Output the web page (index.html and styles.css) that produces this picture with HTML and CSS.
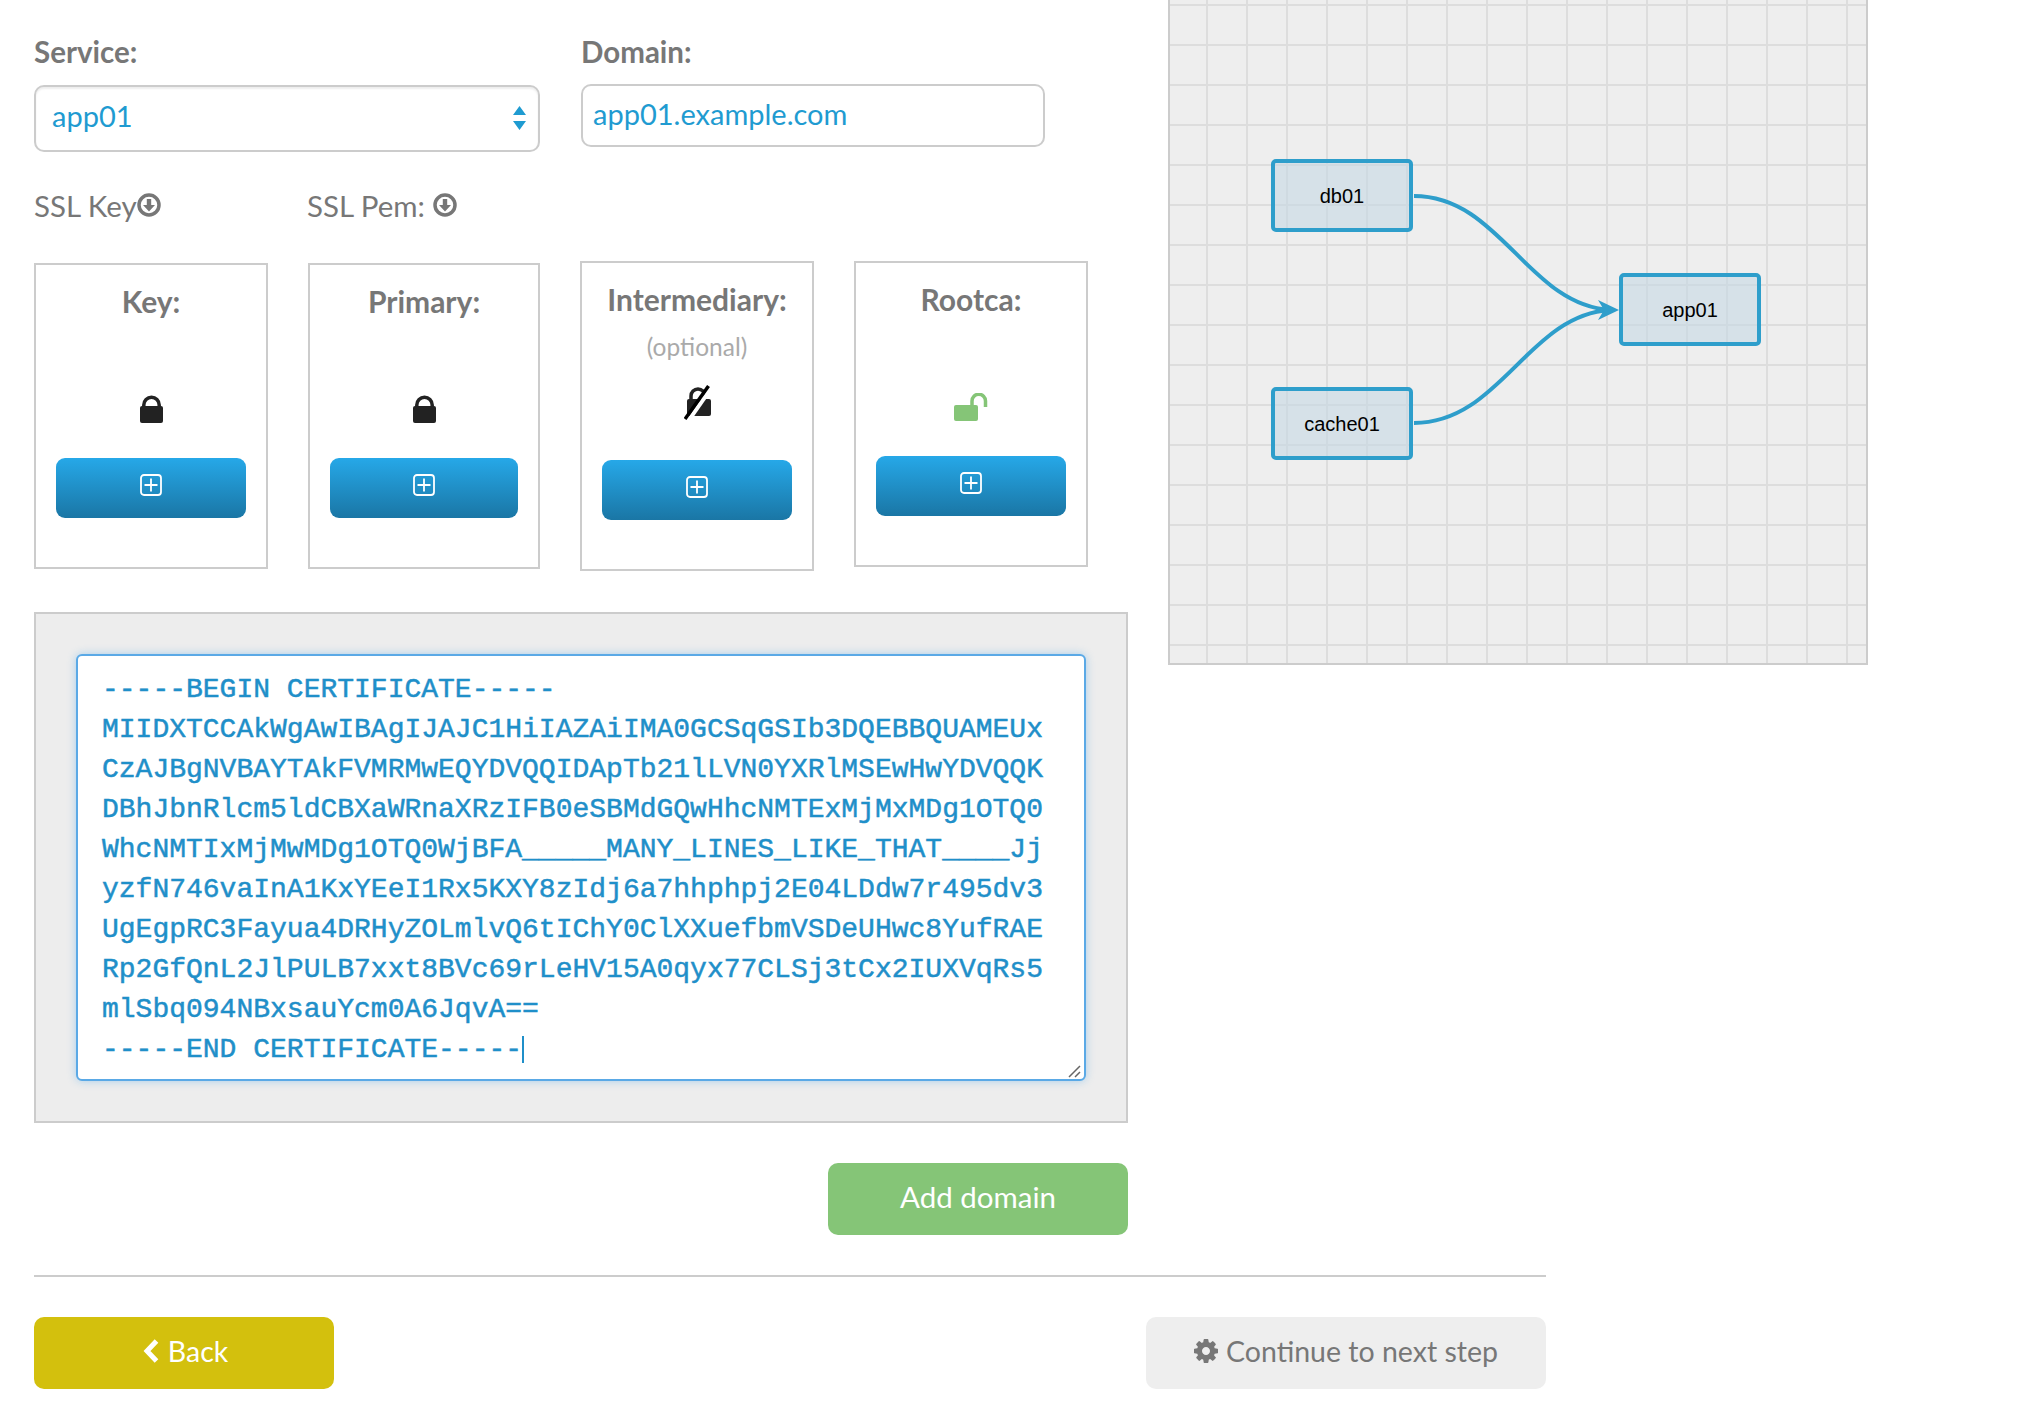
FILE: index.html
```html
<!DOCTYPE html>
<html lang="en">
<head>
  <meta charset="UTF-8" />
  <title>Add domain</title>
  <link rel="stylesheet" href="styles.css">
</head>
<body>
  <div class="page">
    <div class="top">
      <div class="left">
        <div class="fields">
          <div class="field field-service">
            <label class="label">Service:</label>
            <div class="select-wrap">
              <select class="select"><option>app01</option></select>
              <svg class="select-arrows" viewBox="0 0 13 24"><path d="M6.500 0L13 9H0zM0 15h13L6.500 24z"/></svg>
            </div>
          </div>
          <div class="field field-domain">
            <label class="label">Domain:</label>
            <input class="input" type="text" value="app01.example.com">
          </div>
        </div>

        <div class="ssl-links">
          <span class="ssl-link ssl-key">SSL Key<svg class="dl-icon" viewBox="0 0 24 24"><circle cx="12" cy="12" r="10" /><path class="dl-arrow" d="M9.800 6h4.400v6H18l-6 6.500L6 12h3.800z"/></svg></span>
          <span class="ssl-link">SSL Pem: <svg class="dl-icon" viewBox="0 0 24 24"><circle cx="12" cy="12" r="10" /><path class="dl-arrow" d="M9.800 6h4.400v6H18l-6 6.500L6 12h3.800z"/></svg></span>
        </div>

        <div class="cards">
          <div class="card card-low">
            <div class="card-title">Key:</div>
            <div class="card-note"></div>
            <div class="card-icon">
              <svg class="lock" viewBox="0 0 23 28"><path class="lock-shackle" d="M3.800 13V10a7.700 7.700 0 0 1 15.400 0v3"/><rect y="11" width="23" height="17" rx="2"/></svg>
            </div>
            <button class="add-btn"><svg class="plus" viewBox="0 0 22 22"><rect x="1" y="1" width="20" height="20" rx="3"/><path d="M11 4.500v13M4.500 11h13"/></svg></button>
          </div>
          <div class="card card-low card-narrow">
            <div class="card-title">Primary:</div>
            <div class="card-note"></div>
            <div class="card-icon">
              <svg class="lock" viewBox="0 0 23 28"><path class="lock-shackle" d="M3.800 13V10a7.700 7.700 0 0 1 15.400 0v3"/><rect y="11" width="23" height="17" rx="2"/></svg>
            </div>
            <button class="add-btn"><svg class="plus" viewBox="0 0 22 22"><rect x="1" y="1" width="20" height="20" rx="3"/><path d="M11 4.500v13M4.500 11h13"/></svg></button>
          </div>
          <div class="card card-tall">
            <div class="card-title">Intermediary:</div>
            <div class="card-note">(optional)</div>
            <div class="card-icon card-icon-slashed">
              <svg class="lock-off" viewBox="0 0 27 35"><path class="lock-shackle" d="M7 17V11a7 7 0 0 1 14 0v2"/><rect x="3" y="14" width="24" height="17" rx="2"/><path class="slash-gap" d="M28 2L5 35"/><path class="slash" d="M24.500 1L1 34"/></svg>
            </div>
            <button class="add-btn"><svg class="plus" viewBox="0 0 22 22"><rect x="1" y="1" width="20" height="20" rx="3"/><path d="M11 4.500v13M4.500 11h13"/></svg></button>
          </div>
          <div class="card">
            <div class="card-title">Rootca:</div>
            <div class="card-note"></div>
            <div class="card-icon">
              <svg class="unlock" viewBox="0 0 34 28"><path class="unlock-shackle" d="M18 13V8a6.500 6.500 0 0 1 13.500 0v6"/><rect y="12" width="24" height="16" rx="2"/></svg>
            </div>
            <button class="add-btn"><svg class="plus" viewBox="0 0 22 22"><rect x="1" y="1" width="20" height="20" rx="3"/><path d="M11 4.500v13M4.500 11h13"/></svg></button>
          </div>
        </div>

        <div class="cert-box">
          <div class="cert-wrap">
            <textarea class="cert" wrap="off" spellcheck="false">-----BEGIN CERTIFICATE-----
MIIDXTCCAkWgAwIBAgIJAJC1HiIAZAiIMA0GCSqGSIb3DQEBBQUAMEUx
CzAJBgNVBAYTAkFVMRMwEQYDVQQIDApTb21lLVN0YXRlMSEwHwYDVQQK
DBhJbnRlcm5ldCBXaWRnaXRzIFB0eSBMdGQwHhcNMTExMjMxMDg1OTQ0
WhcNMTIxMjMwMDg1OTQ0WjBFA_____MANY_LINES_LIKE_THAT____Jj
yzfN746vaInA1KxYEeI1Rx5KXY8zIdj6a7hhphpj2E04LDdw7r495dv3
UgEgpRC3Fayua4DRHyZOLmlvQ6tIChY0ClXXuefbmVSDeUHwc8YufRAE
Rp2GfQnL2JlPULB7xxt8BVc69rLeHV15A0qyx77CLSj3tCx2IUXVqRs5
mlSbq094NBxsauYcm0A6JqvA==
-----END CERTIFICATE-----</textarea>
            <span class="caret"></span>
            <svg class="grip" viewBox="0 0 13 13"><path d="M1 12L12 1M7 12l5-5"/></svg>
          </div>
        </div>

        <div class="add-row">
          <button class="btn btn-green">Add domain</button>
        </div>
      </div>

      <!-- dependency graph -->
      <div class="graph">
        <svg class="edges" viewBox="0 0 698 665">
          <path d="M244 196C330 196 358 305 440 310"/>
          <path d="M244 423C330 423 358 315 440 310"/>
          <path class="arrow-head" d="M428 300L449 310L428 320L434 310z"/>
        </svg>
        <div class="node node-db">db01</div>
        <div class="node node-cache">cache01</div>
        <div class="node node-app">app01</div>
      </div>
    </div>

    <hr class="rule">

    <div class="nav">
      <button class="btn btn-yellow"><svg class="chevron" viewBox="0 0 17 26"><path d="M13.500 3L4 13l9.500 10"/></svg>Back</button>
      <button class="btn btn-gray"><svg class="gear" viewBox="0 0 1536 1792"><path d="M1024 896q0-106-75-181t-181-75-181 75-75 181 75 181 181 75 181-75 75-181zm512-109v222q0 12-8 23t-20 13l-185 28q-19 54-39 91 35 50 107 138 10 12 10 25t-9 23q-27 37-99 108t-94 71q-12 0-26-9l-138-108q-44 23-91 38-16 136-29 186-7 28-36 28h-222q-14 0-24.500-8.500t-11.500-21.500l-28-184q-49-16-90-37l-141 107q-10 9-25 9-14 0-25-11-126-114-165-168-7-10-7-23 0-12 8-23 15-21 51-66.500t54-70.500q-27-50-41-99l-183-27q-13-2-21-12.500t-8-23.500v-222q0-12 8-23t19-13l186-28q14-46 39-92-40-57-107-138-10-12-10-24 0-10 9-23 26-36 98.500-107.500t94.500-71.500q13 0 26 10l138 107q44-23 91-38 16-136 29-186 7-28 36-28h222q14 0 24.500 8.500t11.500 21.500l28 184q49 16 90 37l142-107q9-9 24-9 13 0 25 10 129 119 165 170 7 8 7 22 0 12-8 23-15 21-51 66.500t-54 70.500q26 50 41 98l183 28q13 2 21 12.500t8 23.500z"/></svg>Continue to next step</button>
    </div>
  </div>
</body>
</html>
```

FILE: styles.css
```css
* {
  box-sizing: border-box;
}

body {
  margin: 0;
  background: white;
  font-family: Lato, "Open Sans", sans-serif;
  color: #777;
}

.page {
  padding-left: 34px;
  width: 1900px;
}

.top {
  display: flex;
  gap: 40px;
  align-items: flex-start;
}

.left {
  width: 1094px;
}

/* service + domain */
.fields {
  display: flex;
  gap: 41px;
  padding-top: 34px;
}

.field-service {
  width: 506px;
}

.field-domain {
  width: 464px;
}

.label {
  display: block;
  height: 36px;
  font-size: 29.5px;
  font-weight: 700;
  line-height: 36px;
}

.field-service .label {
  margin-bottom: 15px;
}

.field-domain .label {
  margin-bottom: 14px;
}

.select-wrap {
  position: relative;
}

.select {
  display: block;
  width: 100%;
  height: 67px;
  padding: 0 16px 6px;
  border: 2px solid #ccc;
  border-radius: 10px;
  background: white;
  box-shadow: inset 0 2px 2px rgba(0, 0, 0, 0.07);
  appearance: none;
  font-family: inherit;
  font-size: 29px;
  color: #1f9bd1;
}

.select-arrows {
  position: absolute;
  top: 21px;
  right: 14px;
  width: 13px;
  height: 24px;
  fill: #1f9bd1;
}

.input {
  display: block;
  width: 100%;
  height: 63px;
  padding: 0 10px 4px;
  border: 2px solid #ccc;
  border-radius: 10px;
  font-family: inherit;
  font-size: 29px;
  color: #1f9bd1;
}

.ssl-links {
  display: flex;
  height: 36px;
  margin-top: 35px;
  align-items: center;
  font-size: 29.5px;
}

.ssl-link {
  display: flex;
  align-items: center;
  white-space: pre;
}

.ssl-key {
  width: 273px;
}

.dl-icon {
  width: 24px;
  height: 24px;
  fill: none;
  stroke: #777;
  stroke-width: 3.5;
}

.dl-arrow {
  fill: #777;
  stroke: none;
}

/* cert cards */
.cards {
  display: flex;
  gap: 40px;
  align-items: flex-start;
  margin-top: 38px;
}

.card {
  width: 234px;
  height: 306px;
  padding: 20px 20px 0;
  border: 2px solid #ccc;
  text-align: center;
}

.card-low {
  margin-top: 2px;
}

.card-narrow {
  width: 232px;
}

.card-tall {
  height: 310px;
}

.card-title {
  height: 36px;
  font-size: 30px;
  font-weight: 700;
  line-height: 33px;
}

.card-note {
  height: 58px;
  padding-top: 10px;
  font-size: 24.5px;
  line-height: 36px;
  color: #aaa;
}

.card-icon {
  display: flex;
  justify-content: center;
  height: 63px;
  margin-top: 16px;
}

.card-icon-slashed {
  height: 75px;
  margin-top: 8px;
}

.lock {
  width: 23px;
  height: 28px;
  fill: #222;
}

.lock-shackle {
  fill: none;
  stroke: #222;
  stroke-width: 3.5;
}

.lock-off {
  width: 27px;
  height: 35px;
  fill: #222;
}

.slash-gap {
  fill: none;
  stroke: white;
  stroke-width: 4;
}

.slash {
  fill: none;
  stroke: black;
  stroke-width: 3.5;
}

.unlock {
  width: 34px;
  height: 28px;
  fill: #85c577;
}

.unlock-shackle {
  fill: none;
  stroke: #85c577;
  stroke-width: 3.5;
}

.add-btn {
  display: flex;
  align-items: center;
  justify-content: center;
  width: 100%;
  height: 60px;
  padding: 0 0 6px;
  border: none;
  border-radius: 9px;
  background: linear-gradient(#26a8e8, #1a76a5);
}

.plus {
  width: 22px;
  height: 22px;
  fill: none;
  stroke: white;
  stroke-width: 1.8;
}

/* pasted certificate */
.cert-box {
  height: 511px;
  margin-top: 41px;
  padding: 40px 42px 0 40px;
  border: 2px solid #ccc;
  background: #ededed;
}

.cert-wrap {
  position: relative;
}

.cert {
  display: block;
  width: 1010px;
  height: 427px;
  padding: 14px 24px 0;
  border: 2px solid #5aa9e6;
  border-radius: 6px;
  outline: none;
  resize: none;
  background: white;
  box-shadow: 0 0 9px rgba(82, 168, 236, 0.45);
  overflow: hidden;
  font-family: "Liberation Mono", "Courier New", monospace;
  font-size: 28px;
  line-height: 40px;
  color: #1f8fc9;
  -webkit-text-stroke: 0.5px #1f8fc9;
}

.caret {
  position: absolute;
  top: 382px;
  left: 446px;
  width: 2px;
  height: 27px;
  background: #1f8fc9;
}

.grip {
  position: absolute;
  right: 3px;
  bottom: 3px;
  width: 13px;
  height: 13px;
  fill: none;
  stroke: #666;
  stroke-width: 1.5;
}

.add-row {
  display: flex;
  justify-content: flex-end;
  margin-top: 40px;
}

/* buttons */
.btn {
  display: flex;
  align-items: center;
  justify-content: center;
  height: 72px;
  padding: 0 0 4px;
  border: none;
  border-radius: 10px;
  font-family: inherit;
  font-size: 28.5px;
}

.btn-green {
  width: 300px;
  padding-bottom: 6px;
  background: #85c577;
  font-size: 29.5px;
  color: white;
}

.btn-yellow {
  width: 300px;
  padding-left: 3px;
  background: #d3c00d;
  color: white;
}

.btn-gray {
  width: 400px;
  background: #eee;
  color: #777;
}

.chevron {
  width: 17px;
  height: 26px;
  margin-right: 8px;
  fill: none;
  stroke: white;
  stroke-width: 5;
}

.gear {
  width: 24px;
  height: 28px;
  margin-right: 8px;
  fill: #777;
}

.rule {
  width: 1512px;
  height: 2px;
  margin: 40px 0;
  border: none;
  background: #ccc;
}

.nav {
  display: flex;
  justify-content: space-between;
  width: 1512px;
  padding-bottom: 20px;
}

/* graph canvas */
.graph {
  position: relative;
  width: 700px;
  height: 665px;
  border: 2px solid #ccc;
  border-top: none;
  background-color: #eee;
  background-image: linear-gradient(#ddd 2px, transparent 2px), linear-gradient(90deg, #ddd 2px, transparent 2px);
  background-size: 40px 40px;
  background-position: 36px 4px;
}

.edges {
  position: absolute;
  top: 0;
  left: 0;
  width: 698px;
  height: 665px;
  fill: none;
  stroke: #2e9ecb;
  stroke-width: 4;
}

.arrow-head {
  fill: #2e9ecb;
  stroke: none;
}

.node {
  position: absolute;
  display: flex;
  align-items: center;
  justify-content: center;
  width: 142px;
  height: 73px;
  padding-top: 2px;
  border: 4px solid #2e9ecb;
  border-radius: 5px;
  background: rgba(198, 216, 228, 0.6);
  font-family: "Liberation Sans", Arial, sans-serif;
  font-size: 20px;
  color: black;
}

.node-db {
  top: 159px;
  left: 101px;
}

.node-cache {
  top: 387px;
  left: 101px;
}

.node-app {
  top: 273px;
  left: 449px;
}
```
